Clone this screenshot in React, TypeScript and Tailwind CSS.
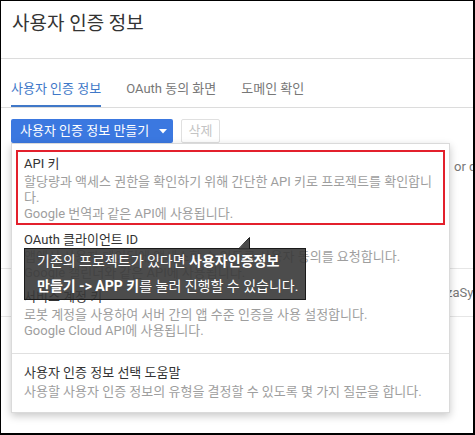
import * as React from 'react';

type MenuItem = {
  title: string;
  lines: React.ReactNode[];
};

const tabs = ['사용자 인증 정보', 'OAuth 동의 화면', '도메인 확인'];

function Tooltip() {
  return (
    <div className="absolute left-[23px] top-[247px] h-[52px] w-[282px] border border-[#1a1a1a] bg-[#383838]/90 pl-[12px] text-[14px] leading-[25px] text-white">
      <svg
        className="absolute left-[213px] top-[-12px]"
        width="13"
        height="13"
        viewBox="0 0 13 13"
      >
        <polygon points="0.5,12.5 11.5,0.5 11.5,12.5" fill="#383838" fillOpacity="0.9" />
        <polyline points="0.5,12 11.5,0.5 11.5,12" fill="none" stroke="#1a1a1a" strokeWidth="1" />
      </svg>
      <p className="whitespace-nowrap">
        기존의 프로젝트가 있다면 <b>사용자인증정보</b>
      </p>
      <p className="whitespace-nowrap">
        <b>만들기 -&gt; APP 키</b>를 눌러 진행할 수 있습니다.
      </p>
    </div>
  );
}

function CreateMenu() {
  const items: MenuItem[] = [
    {
      title: 'OAuth 클라이언트 ID',
      lines: [
        '앱에서 사용자 데이터에 액세스할 수 있도록 사용자 동의를 요청합니다.',
        'Google 캘린더와 같은 API에 사용됩니다.',
      ],
    },
    {
      title: '서비스 계정 키',
      lines: [
        '로봇 계정을 사용하여 서버 간의 앱 수준 인증을 사용 설정합니다.',
        'Google Cloud API에 사용됩니다.',
      ],
    },
  ];

  return (
    <div className="absolute left-[10px] top-[142px] h-[270px] w-[439px] border border-[#dadada] bg-white pt-[6px] text-[13px] leading-[16px] shadow-[0_3px_8px_rgba(0,0,0,0.22)]">
      {/* highlighted option */}
      <div className="mx-[4px] border-2 border-[#e3202c] pb-[1px] pl-[6px] pt-[4px]">
        <div className="text-[#333]">API 키</div>
        <div className="mt-[2px] whitespace-nowrap text-[#9e9e9e]">
          할당량과 액세스 권한을 확인하기 위해 간단한 API 키로 프로젝트를 확인합니
          <br />
          다.
          <br />
          Google 번역과 같은 API에 사용됩니다.
        </div>
      </div>

      {items.map((item, i) => (
        <div key={item.title} className={i === 0 ? 'px-[12px] pt-[7px]' : 'px-[12px] pt-[8px]'}>
          <div className="text-[#333]">{item.title}</div>
          <div className={i === 0 ? 'mt-[1px] text-[#9e9e9e]' : 'mt-[2px] text-[#9e9e9e]'}>
            {item.lines.map((l, j) => (
              <div key={j}>{l}</div>
            ))}
          </div>
        </div>
      ))}

      <div className="mt-[14px] border-t border-[#e0e0e0]" />

      <div className="px-[12px] pt-[11px]">
        <div className="text-[#333]">사용자 인증 정보 선택 도움말</div>
        <div className="mt-[3px] text-[#9e9e9e]">
          사용할 사용자 인증 정보의 유형을 결정할 수 있도록 몇 가지 질문을 합니다.
        </div>
      </div>
    </div>
  );
}

export default function App() {
  return (
    <div className="relative h-[435px] w-[475px] overflow-hidden border-b-2 border-l border-r-2 border-t border-black bg-white font-[Roboto,'Noto_Sans_CJK_KR',sans-serif]">
      <div className="h-[58px] border-b border-[#dcdcdc] pl-[11px] pt-[10px]">
        <h1 className="text-[19px] leading-[26px] text-[#333]">사용자 인증 정보</h1>
      </div>

      <div className="flex h-[49px] items-end gap-[25px] border-b border-[#dcdcdc] pl-[10px] text-[13px] leading-[16px]">
        {tabs.map((t, i) => (
          <div
            key={t}
            className={
              i === 0
                ? 'border-b-2 border-[#4078c8] pb-[8px] text-[#4078c8]'
                : 'border-b-2 border-transparent pb-[8px] text-[#777]'
            }
          >
            {t}
          </div>
        ))}
      </div>

      <div className="mt-[11px] flex gap-[8px] pl-[10px] text-[13px]">
        <button className="flex h-[24px] w-[162px] items-center rounded-[2px] bg-[#3b78e0] pl-[9px] text-white">
          사용자 인증 정보 만들기
          <svg className="ml-[10px]" width="8" height="5" viewBox="0 0 8 5">
            <polygon points="0,0 8,0 4,4.5" fill="#fff" />
          </svg>
        </button>
        <button className="h-[24px] w-[39px] rounded-[2px] border border-[#e0e0e0] bg-white text-[#c4c4c4]">
          삭제
        </button>
      </div>

      {/* table behind the open menu */}
      <div className="whitespace-nowrap text-[13px] leading-[16px] text-[#777]">
        <div className="flex pt-[16px]">
          <div className="w-[453px] shrink-0" />
          <span>or development</span>
        </div>
        <div className="mt-[93px] flex h-[49px] items-center border-y border-[#e6e6e6]">
          <div className="w-[433px] shrink-0" />
          <span>AIzaSyBx3kQ</span>
        </div>
      </div>

      <CreateMenu />
      <Tooltip />
    </div>
  );
}
